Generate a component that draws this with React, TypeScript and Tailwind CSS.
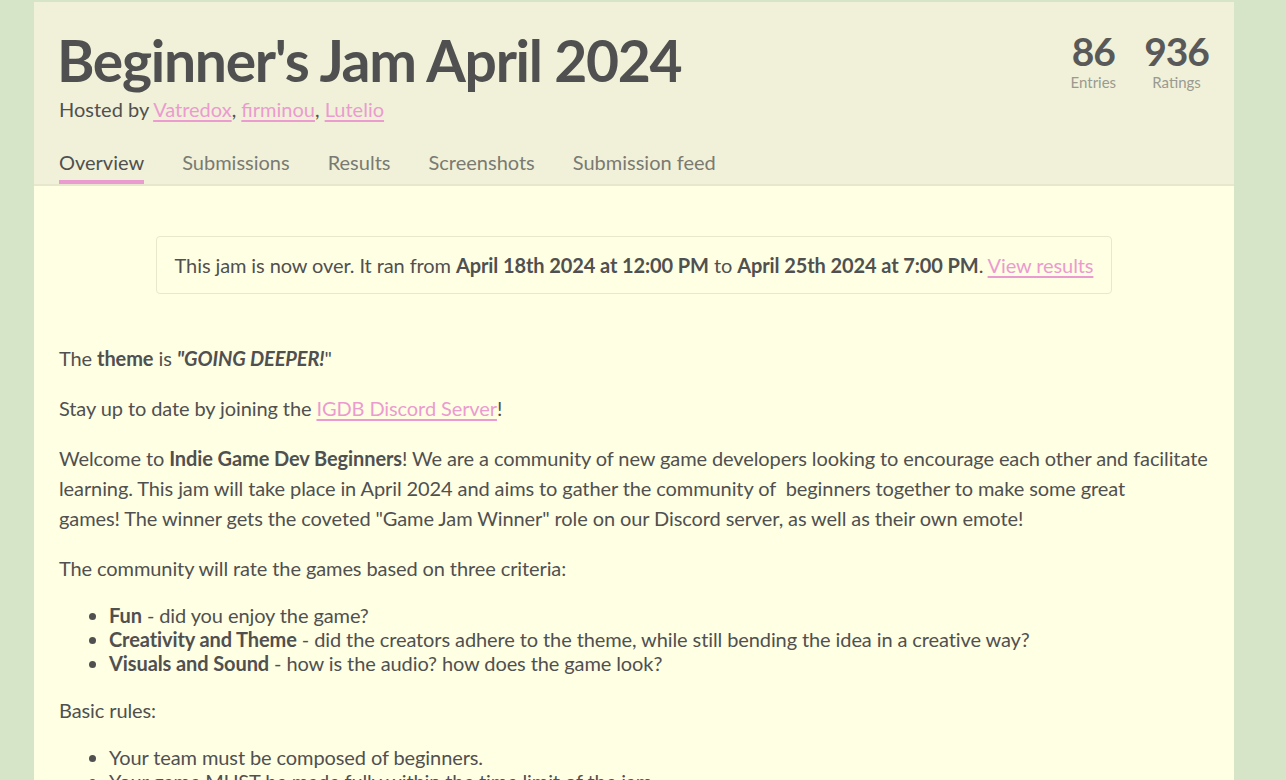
import React from 'react';

const TABS = ['Overview', 'Submissions', 'Results', 'Screenshots', 'Submission feed'];

const Link = ({ children }: { children: React.ReactNode }) => (
  <a href="#" className="text-[#ec9bd0] underline underline-offset-[3px]">
    {children}
  </a>
);

const Stat = ({ value, label }: { value: string; label: string }) => (
  <div className="flex flex-col items-center">
    <span className="text-[39px] font-bold leading-[44px] tracking-[-1px] text-[#595959]">
      {value}
    </span>
    <span className="text-[15px] leading-[18px] text-[#9a9a90]">{label}</span>
  </div>
);

const Header = () => (
  <div className="border-b-2 border-[#e6e7cd] bg-[#f0f1d8] px-[25px]">
    <div className="flex items-start justify-between">
      <div className="pt-[27px]">
        <h1 className="-ml-[2px] text-[57px] font-bold leading-[62px] tracking-[-1.3px] text-[#505050]">
          Beginner's Jam April 2024
        </h1>
        <p className="mt-[3px] text-[20px] leading-[30px] text-[#505050]">
          Hosted by <Link>Vatredox</Link>, <Link>firminou</Link>, <Link>Lutelio</Link>
        </p>
      </div>
      <div className="flex gap-[28px] pt-[27px]">
        <Stat value="86" label="Entries" />
        <Stat value="936" label="Ratings" />
      </div>
    </div>
    <nav className="mt-[23px] flex gap-[38px]">
      {TABS.map((tab, i) => (
        <a
          key={tab}
          href="#"
          className={
            i === 0
              ? 'border-b-4 border-[#ea9bcf] pb-[3px] text-[20px] leading-[30px] text-[#505050]'
              : 'border-b-4 border-transparent pb-[3px] text-[20px] leading-[30px] text-[#7a7a72]'
          }
        >
          {tab}
        </a>
      ))}
    </nav>
  </div>
);

const App = () => {
  return (
    <div
      className="min-h-screen bg-[#d6e4c8] pt-[2px]"
      style={{ fontFamily: 'Lato, "Open Sans", sans-serif' }}
    >
      <div className="ml-[34px] w-[1200px] bg-[#ffffe3]">
        <Header />
        <div className="px-[25px] pb-10 pt-[50px] text-[20px] tracking-[-0.1px] text-[#505050]">
          <div className="mx-[97px] rounded-[4px] border border-[#e8e8cc] py-[12px] text-center leading-[32px]">
            This jam is now over. It ran from <strong>April 18th 2024 at 12:00 PM</strong> to{' '}
            <strong>April 25th 2024 at 7:00 PM</strong>. <Link>View results</Link>
          </div>

          <div className="mt-[49px] flex flex-col gap-[20px] leading-[30px]">
            <p>
              The <strong>theme</strong> is <strong><em>"GOING DEEPER!</em></strong>"
            </p>
            <p>
              Stay up to date by joining the <Link>IGDB Discord Server</Link>!
            </p>
            <p>
              Welcome to <strong>Indie Game Dev Beginners</strong>! We are a community of new game
              developers looking to encourage each other and facilitate learning. This jam will take
              place in April 2024 and aims to gather the community of&nbsp; beginners together to
              make some great
              <br />
              games! The winner gets the coveted "Game Jam Winner" role on our Discord server, as well
              as their own emote!
            </p>
            <p>The community will rate the games based on three criteria:</p>
            <ul className="list-disc pl-[50px] leading-[24px]">
              <li>
                <strong>Fun</strong> - did you enjoy the game?
              </li>
              <li>
                <strong>Creativity and Theme</strong> - did the creators adhere to the theme, while
                still bending the idea in a creative way?
              </li>
              <li>
                <strong>Visuals and Sound</strong> - how is the audio? how does the game look?
              </li>
            </ul>
            <p>Basic rules:</p>
            <ul className="list-disc pl-[50px] leading-[24px]">
              <li>Your team must be composed of beginners.</li>
              <li>Your game MUST be made fully within the time limit of the jam.</li>
              <li>Your game must follow the theme.</li>
            </ul>
          </div>
        </div>
      </div>
    </div>
  );
};

export default App;
